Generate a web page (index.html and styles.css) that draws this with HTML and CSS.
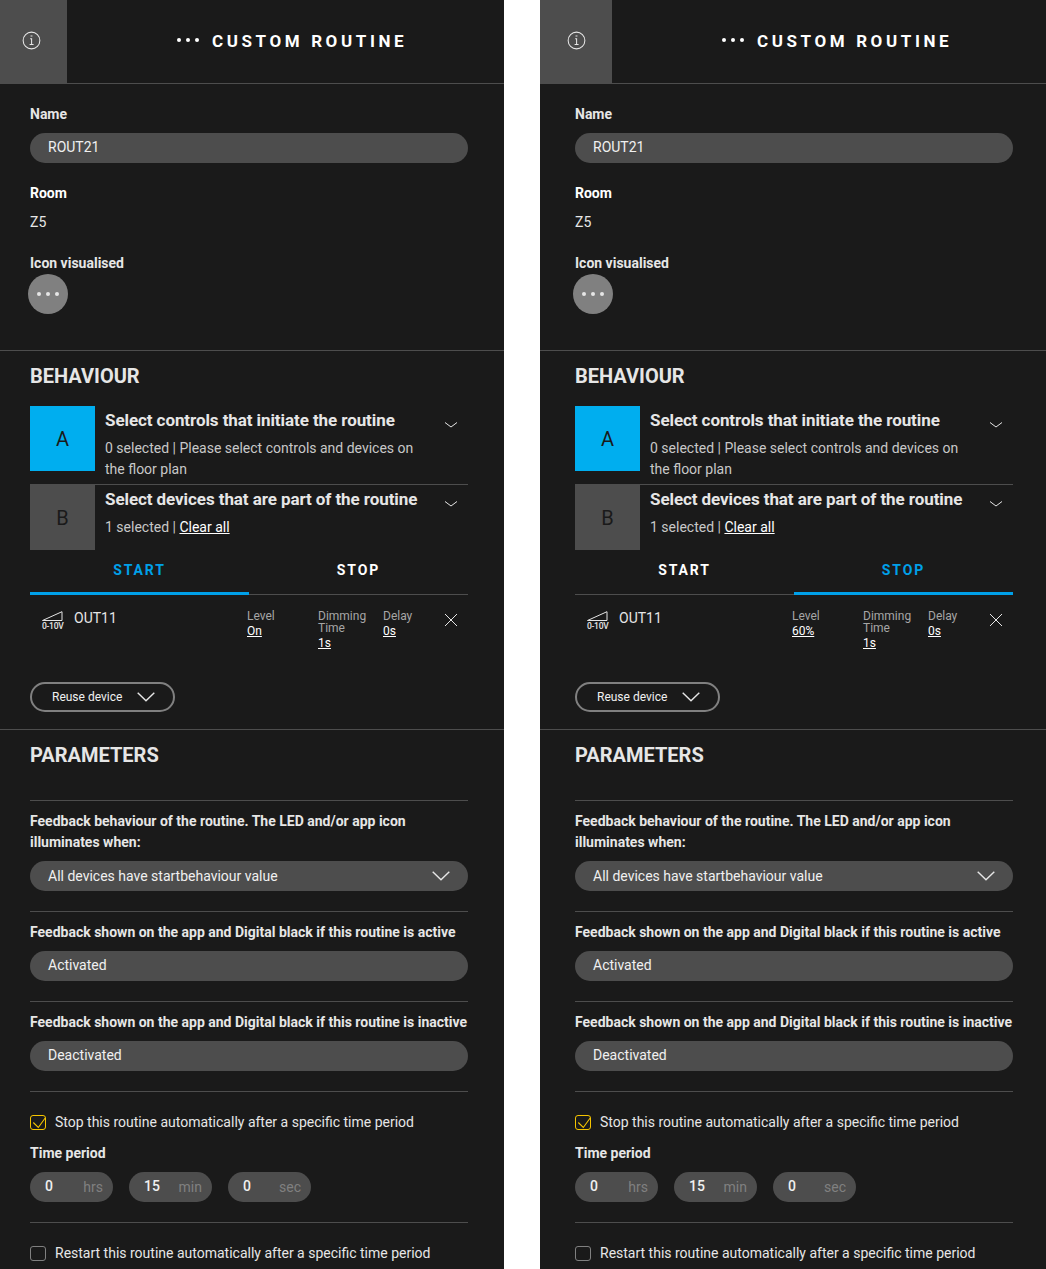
FILE: index.html
```html
<!DOCTYPE html>
<html lang="en">
<head>
<meta charset="utf-8">
<title>Custom routine</title>
<link rel="stylesheet" href="styles.css">
</head>
<body>
<div class="page">

<section class="panel panel-left">
  <header class="topbar">
    <div class="info-tab"><svg class="info-icon" viewBox="0 0 20 20"><circle cx="10" cy="10" r="8.8"/><path d="M9 5.200h2M8.600 8.200h1.500v6M8 14.300h4.200"/></svg></div>
    <div class="title"><span class="dots"><i></i><i></i><i></i></span><span>CUSTOM ROUTINE</span></div>
  </header>
  <div class="general">
    <div class="label">Name</div>
    <div class="pill field-name">ROUT21</div>
    <div class="label label-room">Room</div>
    <div class="room-value">Z5</div>
    <div class="label label-icon">Icon visualised</div>
    <div class="round-icon"><i></i><i></i><i></i></div>
  </div>
  <div class="behaviour">
    <h2>BEHAVIOUR</h2>
    <div class="step step-a">
      <div class="step-box box-a">A</div>
      <div class="step-text">
        <div class="step-title">Select controls that initiate the routine</div>
        <div class="step-sub">0 selected | Please select controls and devices on the floor plan</div>
      </div>
      <svg class="chev-small" viewBox="0 0 14 8"><path d="M1 1.500l6 4.500 6-4.500"/></svg>
    </div>
    <div class="step step-b">
      <div class="step-box box-b">B</div>
      <div class="step-text">
        <div class="step-title">Select devices that are part of the routine</div>
        <div class="step-sub">1 selected | <a class="link">Clear all</a></div>
      </div>
      <svg class="chev-small" viewBox="0 0 14 8"><path d="M1 1.500l6 4.500 6-4.500"/></svg>
    </div>
    <div class="tabs">
      <div class="tab tab-active">START</div>
      <div class="tab">STOP</div>
    </div>
    <div class="device">
      <div class="dev-icon"><svg viewBox="0 0 21 10"><path d="M.5 9.500L20 .7v8.800z"/></svg><span>0-10V</span></div>
      <div class="dev-name">OUT11</div>
      <div class="col col-level"><div class="col-label">Level</div><a class="link">On</a></div>
      <div class="col col-dim"><div class="col-label">Dimming Time</div><a class="link">1s</a></div>
      <div class="col col-delay"><div class="col-label">Delay</div><a class="link">0s</a></div>
      <svg class="close" viewBox="0 0 14 14"><path d="M1 1l12 12M13 1L1 13"/></svg>
    </div>
    <div class="reuse">Reuse device<svg class="chev-large" viewBox="0 0 18 10"><path d="M.7.700L9 8.800 17.300.700"/></svg></div>
  </div>
  <div class="parameters">
    <h2>PARAMETERS</h2>
    <div class="param param-first">
      <div class="label">Feedback behaviour of the routine. The LED and/or app icon illuminates when:</div>
      <div class="pill pill-select">All devices have startbehaviour value<svg class="chev-large" viewBox="0 0 18 10"><path d="M.7.700L9 8.800 17.300.700"/></svg></div>
    </div>
    <div class="param">
      <div class="label">Feedback shown on the app and Digital black if this routine is active</div>
      <div class="pill">Activated</div>
    </div>
    <div class="param">
      <div class="label label-nowrap">Feedback shown on the app and Digital black if this routine is inactive</div>
      <div class="pill">Deactivated</div>
    </div>
    <div class="param param-check">
      <div class="check-row"><span class="check check-on"><svg viewBox="0 0 16 16"><path d="M3.300 8.500l5 5L15.200 4"/></svg></span>Stop this routine automatically after a specific time period</div>
      <div class="label label-time">Time period</div>
      <div class="times">
        <div class="time"><b>0</b><span>hrs</span></div>
        <div class="time"><b>15</b><span>min</span></div>
        <div class="time"><b>0</b><span>sec</span></div>
      </div>
    </div>
    <div class="param param-check param-last">
      <div class="check-row"><span class="check"></span>Restart this routine automatically after a specific time period</div>
    </div>
  </div>
</section>

<section class="panel panel-right">
  <header class="topbar">
    <div class="info-tab"><svg class="info-icon" viewBox="0 0 20 20"><circle cx="10" cy="10" r="8.8"/><path d="M9 5.200h2M8.600 8.200h1.500v6M8 14.300h4.200"/></svg></div>
    <div class="title"><span class="dots"><i></i><i></i><i></i></span><span>CUSTOM ROUTINE</span></div>
  </header>
  <div class="general">
    <div class="label">Name</div>
    <div class="pill field-name">ROUT21</div>
    <div class="label label-room">Room</div>
    <div class="room-value">Z5</div>
    <div class="label label-icon">Icon visualised</div>
    <div class="round-icon"><i></i><i></i><i></i></div>
  </div>
  <div class="behaviour">
    <h2>BEHAVIOUR</h2>
    <div class="step step-a">
      <div class="step-box box-a">A</div>
      <div class="step-text">
        <div class="step-title">Select controls that initiate the routine</div>
        <div class="step-sub">0 selected | Please select controls and devices on the floor plan</div>
      </div>
      <svg class="chev-small" viewBox="0 0 14 8"><path d="M1 1.500l6 4.500 6-4.500"/></svg>
    </div>
    <div class="step step-b">
      <div class="step-box box-b">B</div>
      <div class="step-text">
        <div class="step-title">Select devices that are part of the routine</div>
        <div class="step-sub">1 selected | <a class="link">Clear all</a></div>
      </div>
      <svg class="chev-small" viewBox="0 0 14 8"><path d="M1 1.500l6 4.500 6-4.500"/></svg>
    </div>
    <div class="tabs">
      <div class="tab">START</div>
      <div class="tab tab-active">STOP</div>
    </div>
    <div class="device">
      <div class="dev-icon"><svg viewBox="0 0 21 10"><path d="M.5 9.500L20 .7v8.800z"/></svg><span>0-10V</span></div>
      <div class="dev-name">OUT11</div>
      <div class="col col-level"><div class="col-label">Level</div><a class="link">60%</a></div>
      <div class="col col-dim"><div class="col-label">Dimming Time</div><a class="link">1s</a></div>
      <div class="col col-delay"><div class="col-label">Delay</div><a class="link">0s</a></div>
      <svg class="close" viewBox="0 0 14 14"><path d="M1 1l12 12M13 1L1 13"/></svg>
    </div>
    <div class="reuse">Reuse device<svg class="chev-large" viewBox="0 0 18 10"><path d="M.7.700L9 8.800 17.300.700"/></svg></div>
  </div>
  <div class="parameters">
    <h2>PARAMETERS</h2>
    <div class="param param-first">
      <div class="label">Feedback behaviour of the routine. The LED and/or app icon illuminates when:</div>
      <div class="pill pill-select">All devices have startbehaviour value<svg class="chev-large" viewBox="0 0 18 10"><path d="M.7.700L9 8.800 17.300.700"/></svg></div>
    </div>
    <div class="param">
      <div class="label">Feedback shown on the app and Digital black if this routine is active</div>
      <div class="pill">Activated</div>
    </div>
    <div class="param">
      <div class="label label-nowrap">Feedback shown on the app and Digital black if this routine is inactive</div>
      <div class="pill">Deactivated</div>
    </div>
    <div class="param param-check">
      <div class="check-row"><span class="check check-on"><svg viewBox="0 0 16 16"><path d="M3.300 8.500l5 5L15.200 4"/></svg></span>Stop this routine automatically after a specific time period</div>
      <div class="label label-time">Time period</div>
      <div class="times">
        <div class="time"><b>0</b><span>hrs</span></div>
        <div class="time"><b>15</b><span>min</span></div>
        <div class="time"><b>0</b><span>sec</span></div>
      </div>
    </div>
    <div class="param param-check param-last">
      <div class="check-row"><span class="check"></span>Restart this routine automatically after a specific time period</div>
    </div>
  </div>
</section>

</div>
</body>
</html>
```
FILE: styles.css
```css
* { box-sizing: border-box; }
html, body { margin: 0; padding: 0; background: #fff; }
body { height: 1269px; overflow: hidden; font-family: Roboto, "Liberation Sans", sans-serif; font-size: 14px; color: #e6e6e6; }
.page { display: flex; gap: 36px; height: 1269px; align-items: stretch; }
.panel { background: #1a1a1a; overflow: hidden; height: 1269px; --pl: 30px; --pr: 36px; --tab: 67px; }
.panel-left { width: 504px; }
.panel-right { width: 506px; --pl: 35px; --pr: 33px; --tab: 72px; }

.topbar { display: flex; height: 84px; border-bottom: 1px solid #4d4d4d; }
.info-tab { width: var(--tab); height: 83px; background: #4d4d4d; padding: 31px 0 0 22px; flex: none; }
.panel-right .info-tab { padding-left: 27px; }
.info-icon { width: 19px; height: 19px; display: block; fill: none; stroke: #e6e6e6; stroke-width: 1.1; }
.title { margin-left: 110px; padding-top: 30px; display: flex; align-items: center; height: 51px; font-size: 17px; font-weight: 700; letter-spacing: 3.6px; color: #fff; line-height: 20px; }
.dots { display: flex; gap: 5px; margin-right: 13px; margin-top: -2px; }
.dots i { width: 4px; height: 4px; border-radius: 50%; background: #fff; display: block; }

.general { height: 267px; padding: 20px var(--pr) 0 var(--pl); border-bottom: 1px solid #4d4d4d; }
.label { font-weight: 700; font-size: 14px; line-height: 21px; color: #e6e6e6; }
.pill { height: 30px; border-radius: 15px; background: #4d4d4d; padding: 0 18px 2px; color: #f0f0f0; font-size: 14px; display: flex; align-items: center; justify-content: space-between; }
.field-name { margin-top: 8px; }
.label-room { margin-top: 20px; color: #fff; }
.room-value { margin-top: 8px; line-height: 21px; }
.label-icon { margin-top: 20px; }
.round-icon { width: 40px; height: 40px; border-radius: 50%; background: #808080; margin: 0 0 0 -2px; display: flex; align-items: center; justify-content: center; gap: 5px; }
.round-icon i { width: 4px; height: 4px; border-radius: 50%; background: #e6e6e6; display: block; }

h2 { margin: 0; font-size: 20px; font-weight: 700; line-height: 24px; color: #e6e6e6; }
.behaviour { height: 379px; padding: 13px var(--pr) 0 var(--pl); border-bottom: 1px solid #4d4d4d; }
.step { display: flex; align-items: flex-start; }
.step-a { margin-top: 18px; height: 79px; border-bottom: 1px solid #4d4d4d; }
.step-b { height: 66px; }
.step-box { width: 65px; height: 65px; flex: none; display: flex; align-items: center; justify-content: center; font-size: 20px; color: #1a1a1a; }
.step-b .step-box { height: 66px; margin-top: -1px; padding-top: 2px; }
.box-a { background: #00aeef; }
.box-b { background: #4d4d4d; }
.step-text { padding: 4px 0 0 10px; width: 330px; }
.step-title { font-size: 17px; line-height: 20px; font-weight: 700; color: #e6e6e6; white-space: nowrap; letter-spacing: -0.08px; }
.step-sub { margin-top: 8px; font-size: 14px; line-height: 21px; color: #c8c8c8; }
.link { color: #fff; text-decoration: underline; }
.chev-small { width: 14px; height: 8px; fill: none; stroke: #e6e6e6; stroke-width: 1; margin: 15px 0 0 19px; flex: none; }

.tabs { display: flex; height: 44px; border-bottom: 1px solid #4d4d4d; }
.tab { width: 50%; height: 44px; text-align: center; font-size: 14px; font-weight: 700; letter-spacing: 1.9px; line-height: 38px; color: #fff; border-bottom: 3px solid transparent; margin-bottom: -1px; }
.tab-active { color: #00a0e9; border-bottom-color: #00a0e9; }

.device { display: flex; height: 87px; padding-top: 14px; }
.dev-icon { width: 44px; padding: 2px 0 0 12px; flex: none; }
.dev-icon svg { width: 21px; height: 10px; display: block; fill: none; stroke: #e6e6e6; stroke-width: 1; }
.dev-icon span { display: block; font-size: 8.5px; font-weight: 500; line-height: 9px; margin-top: 1px; color: #e6e6e6; letter-spacing: -0.3px; }
.dev-name { font-size: 14px; line-height: 18px; width: 173px; flex: none; }
.col { flex: none; font-size: 12px; line-height: 12px; color: #a6a6a6; padding-top: 1px; }
.col-label { margin-bottom: 2px; }
.col .link { display: block; line-height: 15px; }
.col-level { width: 71px; }
.col-dim { width: 65px; }
.col-delay { width: 61px; }
.close { width: 14px; height: 14px; fill: none; stroke: #e6e6e6; stroke-width: 1; margin-top: 4px; flex: none; }

.reuse { width: 145px; height: 30px; border: 2px solid #808080; border-radius: 15px; padding: 0 18px 0 20px; display: flex; align-items: center; justify-content: space-between; font-size: 12px; color: #f0f0f0; }
.chev-large { width: 18px; height: 10px; fill: none; stroke: #e6e6e6; stroke-width: 1.4; flex: none; }

.parameters { padding: 13px var(--pr) 0 var(--pl); }
.param { border-top: 1px solid #4d4d4d; padding-top: 10px; height: 90px; }
.param-first { margin-top: 33px; height: 111px; }
.param .pill { margin-top: 8px; }
.param .pill-select { padding-bottom: 0; }
.label-nowrap { white-space: nowrap; }
.param-check { height: 131px; padding-top: 20px; }
.param-last { height: auto; }
.check-row { display: flex; align-items: center; line-height: 21px; font-size: 14px; color: #e6e6e6; }
.check { width: 16px; height: 15px; border: 1px solid #808080; border-radius: 3px; margin-right: 9px; flex: none; position: relative; }
.check-on { border-color: #f5c400; }
.check svg { position: absolute; left: -1px; top: -2px; width: 16px; height: 16px; fill: none; stroke: #f5c400; stroke-width: 1.1; }
.label-time { margin-top: 10px; }
.times { display: flex; gap: 16px; margin-top: 8px; }
.time { width: 83px; height: 30px; border-radius: 15px; background: #4d4d4d; display: flex; align-items: center; justify-content: space-between; padding: 0 10px 0 15px; font-size: 14px; }
.time b { font-weight: 500; color: #f0f0f0; margin-top: -3px; }
.time span { color: #808080; }
```
